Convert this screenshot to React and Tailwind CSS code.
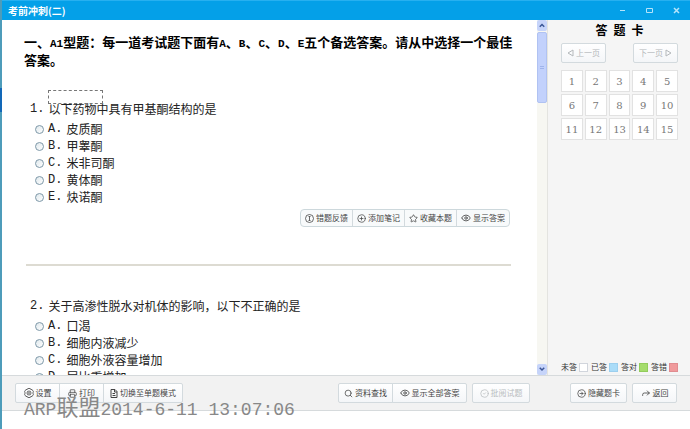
import React, { useState } from 'react'
import {
  CircleArrowRight, CircleCheck, CirclePlus, Eye, Forward, Printer, Search, Star,
} from 'lucide-react'

const questions = [
  {
    id: 1,
    title: '以下药物中具有甲基酮结构的是',
    options: ['皮质酮', '甲睾酮', '米非司酮', '黄体酮', '炔诺酮'],
  },
  {
    id: 2,
    title: '关于高渗性脱水对机体的影响，以下不正确的是',
    options: ['口渴', '细胞内液减少', '细胞外液容量增加', '尿比重增加'],
  },
]

const legend = [
  { label: '未答', color: 'bg-white border-gray-300' },
  { label: '已答', color: 'bg-[#aadcf8] border-[#9ccfee]' },
  { label: '答对', color: 'bg-[#a5dc6c] border-[#92cc5c]' },
  { label: '答错', color: 'bg-[#f09a9c] border-[#e08c90]' },
]

const button = 'flex h-5 items-center justify-center gap-[2px] border border-[#d3dade] bg-linear-to-b from-white to-[#f4f6f8] text-[8px] whitespace-nowrap'

function InfoIcon() {
  return (
    <svg viewBox="0 0 18 18" className="size-[9px] shrink-0" fill="none" stroke="currentColor" strokeWidth="1.6">
      <circle cx="9" cy="9" r="8" />
      <path d="M9 5v8M7 5h4M7 13h4" />
    </svg>
  )
}

function GearIcon() {
  return (
    <svg viewBox="0 0 20 20" className="size-[10px] shrink-0" fill="none" stroke="currentColor" strokeWidth="1.6">
      <path d="M7.500 1h5l1 2.200 2.600-.2 2.900 4.500L17.500 10l1.500 2.500-2.900 4.500-2.600-.2-1 2.200h-5l-1-2.200-2.600.2L1 12.500 2.500 10 1 7.500 3.900 3l2.600.2z" />
      <circle cx="10" cy="10" r="4" />
      <circle cx="10" cy="10" r="1" />
    </svg>
  )
}

function PageIcon() {
  return (
    <svg viewBox="0 0 16 18" className="h-[9px] w-2 shrink-0" fill="none" stroke="currentColor" strokeWidth="2">
      <path d="M2 1h8l4 4v12H2zM9 1v5h5M5 9h5M5 13h6" />
    </svg>
  )
}

function Question({ id, title, options, marked }) {
  return (
    <fieldset>
      <legend className="relative flex h-[18px] items-center gap-1 pl-[6px] text-xs">
        <span className="font-['Liberation_Mono']">{id}.</span>
        <span>{title}</span>
        {marked && <span className="absolute -top-[10px] left-6 h-[14px] w-[55px] border border-dashed border-[#777]" />}
      </legend>
      <div className="mt-[2px] pl-[11px]">
        {options.map((text, i) => (
          <label key={text} className="flex h-[17px] items-center text-xs">
            <input
              type="radio"
              name={`q${id}`}
              className="mt-[2px] mr-1 size-[9px] shrink-0 appearance-none rounded-full border border-[#7d98a8] bg-linear-to-br from-[#dfe8ec] to-white checked:bg-[#04a0e8]"
            />
            <span className="mr-1 font-['Liberation_Mono']">{'ABCDE'[i]}.</span>
            {text}
          </label>
        ))}
      </div>
    </fieldset>
  )
}

function QuestionTools() {
  const tool = 'flex h-4 w-[52px] items-center justify-center gap-[2px] border-r border-[#d3dade] whitespace-nowrap last:border-r-0'
  return (
    <div className="flex justify-end pr-px">
      <div className="flex rounded-sm border border-[#cdd8dc] bg-[#f8fafb] text-[8px] text-[#444]">
        <button className={tool}><InfoIcon />错题反馈</button>
        <button className={tool}><CirclePlus size={9} />添加笔记</button>
        <button className={tool}><Star size={9} />收藏本题</button>
        <button className={tool}><Eye size={10} />显示答案</button>
      </div>
    </div>
  )
}

function ScrollBar() {
  const arrow = 'flex h-[11px] items-center justify-center rounded-xs bg-[#c6d4fa] text-[#3b5696]'
  return (
    <div className="flex w-[11px] shrink-0 flex-col border-r border-[#e4e4e0] bg-[#f7f7f2]">
      <button aria-label="向上滚动" className={arrow}>
        <svg viewBox="0 0 8 6" className="w-[6px]" fill="none" stroke="currentColor" strokeWidth="2"><path d="M1 5l3-3 3 3" /></svg>
      </button>
      <div className="mt-px flex h-[71px] flex-col items-center justify-center gap-px rounded-xs border border-[#b0c2f2] bg-[#c2d1fc]">
        <span className="h-px w-1 bg-[#9fb3ea]" />
        <span className="h-px w-1 bg-[#9fb3ea]" />
      </div>
      <button aria-label="向下滚动" className={`${arrow} mt-auto`}>
        <svg viewBox="0 0 8 6" className="w-[6px]" fill="none" stroke="currentColor" strokeWidth="2"><path d="M1 1l3 3 3-3" /></svg>
      </button>
    </div>
  )
}

function AnswerCard() {
  return (
    <aside className="flex w-[142px] shrink-0 flex-col bg-[#f5f5f5] pr-3 pl-[13px]">
      <h2 className="flex h-5 items-center justify-center gap-[6px] text-xs font-bold text-black">
        <span>答</span><span>题</span><span>卡</span>
      </h2>
      <div className="mt-[3px] flex justify-between text-[#b4b8bb]">
        <button disabled className={`${button} w-[45px] rounded-xs`}>
          <svg viewBox="0 0 7 8" className="w-[7px]" fill="none" stroke="currentColor"><path d="M6 1v6L1 4z" /></svg>
          上一页
        </button>
        <button disabled className={`${button} w-[45px] rounded-xs`}>
          下一页
          <svg viewBox="0 0 7 8" className="w-[7px]" fill="none" stroke="currentColor"><path d="M1 1v6l5-3z" /></svg>
        </button>
      </div>
      <div className="mt-[7px] grid grid-cols-5 gap-[2px]">
        {Array.from({ length: 15 }, (_, i) => (
          <button key={i} className="h-[22px] border border-[#e2e2e2] bg-white font-['DejaVu_Serif'] text-[10px] text-[#777]">
            {i + 1}
          </button>
        ))}
      </div>
      <ul className="mt-auto flex h-4 justify-between text-[8px] text-[#333]">
        {legend.map(item => (
          <li key={item.label} className="flex h-4 items-center gap-[2px] whitespace-nowrap">
            {item.label}
            <span className={`size-[9px] border ${item.color}`} />
          </li>
        ))}
      </ul>
    </aside>
  )
}

function Toolbar() {
  return (
    <footer className="flex h-9 shrink-0 items-center border-y border-[#d6dadc] bg-[#f2f2f2] pr-[13px] pl-[13px] text-[#444]">
      <div className="mr-auto flex">
        <button className={`${button} w-[45px] rounded-l-xs`}><GearIcon />设置</button>
        <button className={`${button} -ml-px w-[45px]`}><Printer size={9} />打印</button>
        <button className={`${button} -ml-px w-20 rounded-r-xs`}><PageIcon />切换至单题模式</button>
      </div>
      <div className="mr-[5px] flex">
        <button className={`${button} w-[55px] rounded-l-xs`}><Search size={9} />资料查找</button>
        <button className={`${button} -ml-px w-[75px] rounded-r-xs`}><Eye size={10} />显示全部答案</button>
      </div>
      <button disabled className={`${button} mr-10 w-[58px] rounded-xs text-[#b8bcbf]`}><CircleCheck size={9} />批阅试题</button>
      <div className="flex gap-[5px]">
        <button className={`${button} w-[57px] rounded-xs`}><CircleArrowRight size={9} />隐藏题卡</button>
        <button className={`${button} w-[45px] rounded-xs`}><Forward size={10} />返回</button>
      </div>
    </footer>
  )
}

export default function App() {
  const [open] = useState(true)
  const latin = "font-['Liberation_Mono'] text-[11px] leading-none"

  return (
    <div className="flex h-screen overflow-hidden bg-white font-['Noto_Sans_CJK_SC',sans-serif] text-[#222]">
      {/* edge of the window behind */}
      <div className="w-[2px] shrink-0 bg-[#4d9cba] pt-[88px]">
        <div className="h-6 bg-[#1268b8]" />
      </div>

      <div className="relative flex min-w-0 flex-1 flex-col">
        <header className="flex h-5 shrink-0 items-center justify-between border-t border-[#27b0f0] bg-[#04a0e8] pr-[10px] pl-[6px] text-white">
          <h1 className="text-[10px] font-bold">考前冲刺(二)</h1>
          <div className="flex items-center gap-5 text-[#b5e4fb]">
            <button aria-label="最小化"><svg viewBox="0 0 7 7" className="size-[7px]" stroke="currentColor"><path d="M1 3.500h5" /></svg></button>
            <button aria-label="最大化"><svg viewBox="0 0 7 7" className="size-[7px]" fill="none" stroke="currentColor"><path d="M.5 1.500h6v4h-6z" /></svg></button>
            <button aria-label="关闭"><svg viewBox="0 0 7 7" className="size-[7px]" stroke="currentColor" strokeWidth="1.500"><path d="M1 1l5 5M6 1L1 6" /></svg></button>
          </div>
        </header>

        <div className="flex min-h-0 flex-1">
          <main className="min-w-0 flex-1 overflow-hidden pt-[13px] pr-[26px] pl-[22px]">
            <h2 className="-mr-3 text-[13px] leading-[18px] font-bold text-black">
              一、<span className={latin}>A1</span>型题：每一道考试题下面有<span className={latin}>A</span>、<span className={latin}>B</span>、<span className={latin}>C</span>、<span className={latin}>D</span>、<span className={latin}>E</span>五个备选答案。请从中选择一个最佳答案。
            </h2>
            <div className="mt-[31px]">
              <Question {...questions[0]} marked={open} />
            </div>
            <div className="mt-1">
              <QuestionTools />
            </div>
            <hr className="mt-[37px] ml-[2px] border-t-2 border-[#dddbd2]" />
            <div className="mt-[31px]">
              <Question {...questions[1]} />
            </div>
          </main>
          <ScrollBar />
          {open && <AnswerCard />}
        </div>

        <Toolbar />
        <div className="h-[18px] shrink-0 bg-white" />

        <p className="pointer-events-none absolute bottom-[7px] left-[22px] font-['Liberation_Mono'] text-lg leading-6 whitespace-nowrap text-[#888]">
          ARP<span className="font-['Noto_Sans_CJK_SC'] text-[22px]">联盟</span>2014-6-11 13:07:06
        </p>
      </div>
    </div>
  )
}
